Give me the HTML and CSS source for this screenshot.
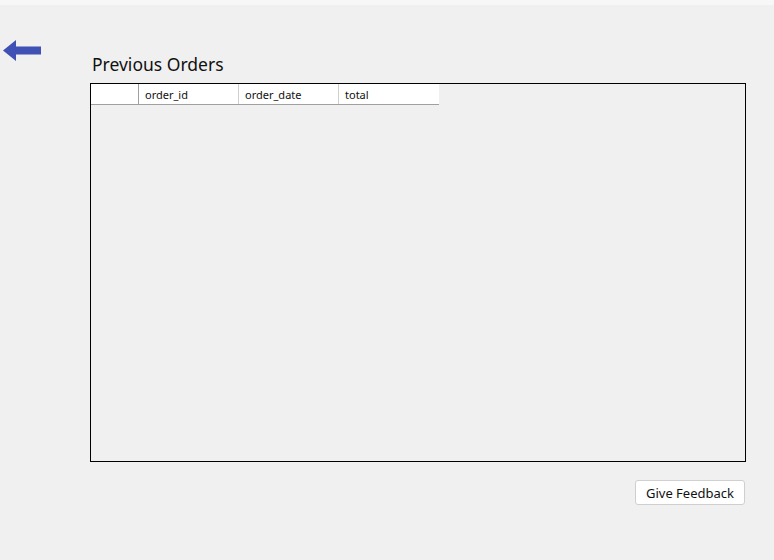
FILE: index.html
```html
<!DOCTYPE html>
<html>
<head>
<meta charset="utf-8">
<link rel="stylesheet" href="styles.css">
</head>
<body>
<div class="strip"></div>
<div class="page">
  <div class="back">
    <svg width="39" height="22" viewBox="0 0 39 22"><polygon points="0,10.5 13,0 13,6.5 38,6.5 38,14.5 13,14.5 13,21" fill="#3f51b5"/></svg>
  </div>
  <div class="content">
    <div class="title">Previous Orders</div>
    <div class="table-box">
      <div class="header">
        <div class="cell corner"></div>
        <div class="cell">order_id</div>
        <div class="cell">order_date</div>
        <div class="cell">total</div>
      </div>
    </div>
    <div class="actions">
      <button class="btn">Give Feedback</button>
    </div>
  </div>
</div>
</body>
</html>
```
FILE: styles.css
```css
html, body {
  margin: 0;
  padding: 0;
}
body {
  background: #f0f0f0;
  font-family: "Noto Sans", "Open Sans", sans-serif;
  color: #111;
  width: 774px;
  height: 560px;
  overflow: hidden;
}
.strip {
  height: 5px;
  background: #f7f7f7;
}
.page {
  display: flex;
}
.back {
  margin-left: 3px;
  margin-top: 35px;
  width: 39px;
  height: 22px;
}
.back svg {
  display: block;
}
.content {
  margin-left: 48px;
  margin-top: 47px;
  width: 656px;
}
.title {
  font-size: 17.5px;
  line-height: 26px;
  padding-left: 2px;
  margin-top: -1px;
  margin-bottom: 6px;
}
.table-box {
  box-sizing: border-box;
  width: 656px;
  height: 379px;
  border: 1px solid #000;
  background: #f0f0f0;
}
.header {
  display: flex;
  width: 348px;
  height: 21px;
  box-sizing: border-box;
  background: #fff;
  border-bottom: 1px solid #a0a0a0;
}
.cell {
  box-sizing: border-box;
  width: 100px;
  height: 20px;
  border-right: 1px solid #d0d0d0;
  font-size: 11px;
  line-height: 21px;
  padding-left: 6px;
  font-family: "Noto Sans", sans-serif;
}
.cell.corner {
  width: 48px;
  border-right: 1px solid #a0a0a0;
}
.cell:last-child {
  border-right: none;
}
.actions {
  display: flex;
  justify-content: flex-end;
  margin-top: 18px;
  padding-right: 1px;
}
.btn {
  box-sizing: border-box;
  width: 110px;
  height: 25px;
  background: #fff;
  border: 1px solid #cfcfcf;
  border-radius: 3px;
  font-family: "Noto Sans", sans-serif;
  font-size: 13px;
  color: #111;
  padding: 0;
}
```
